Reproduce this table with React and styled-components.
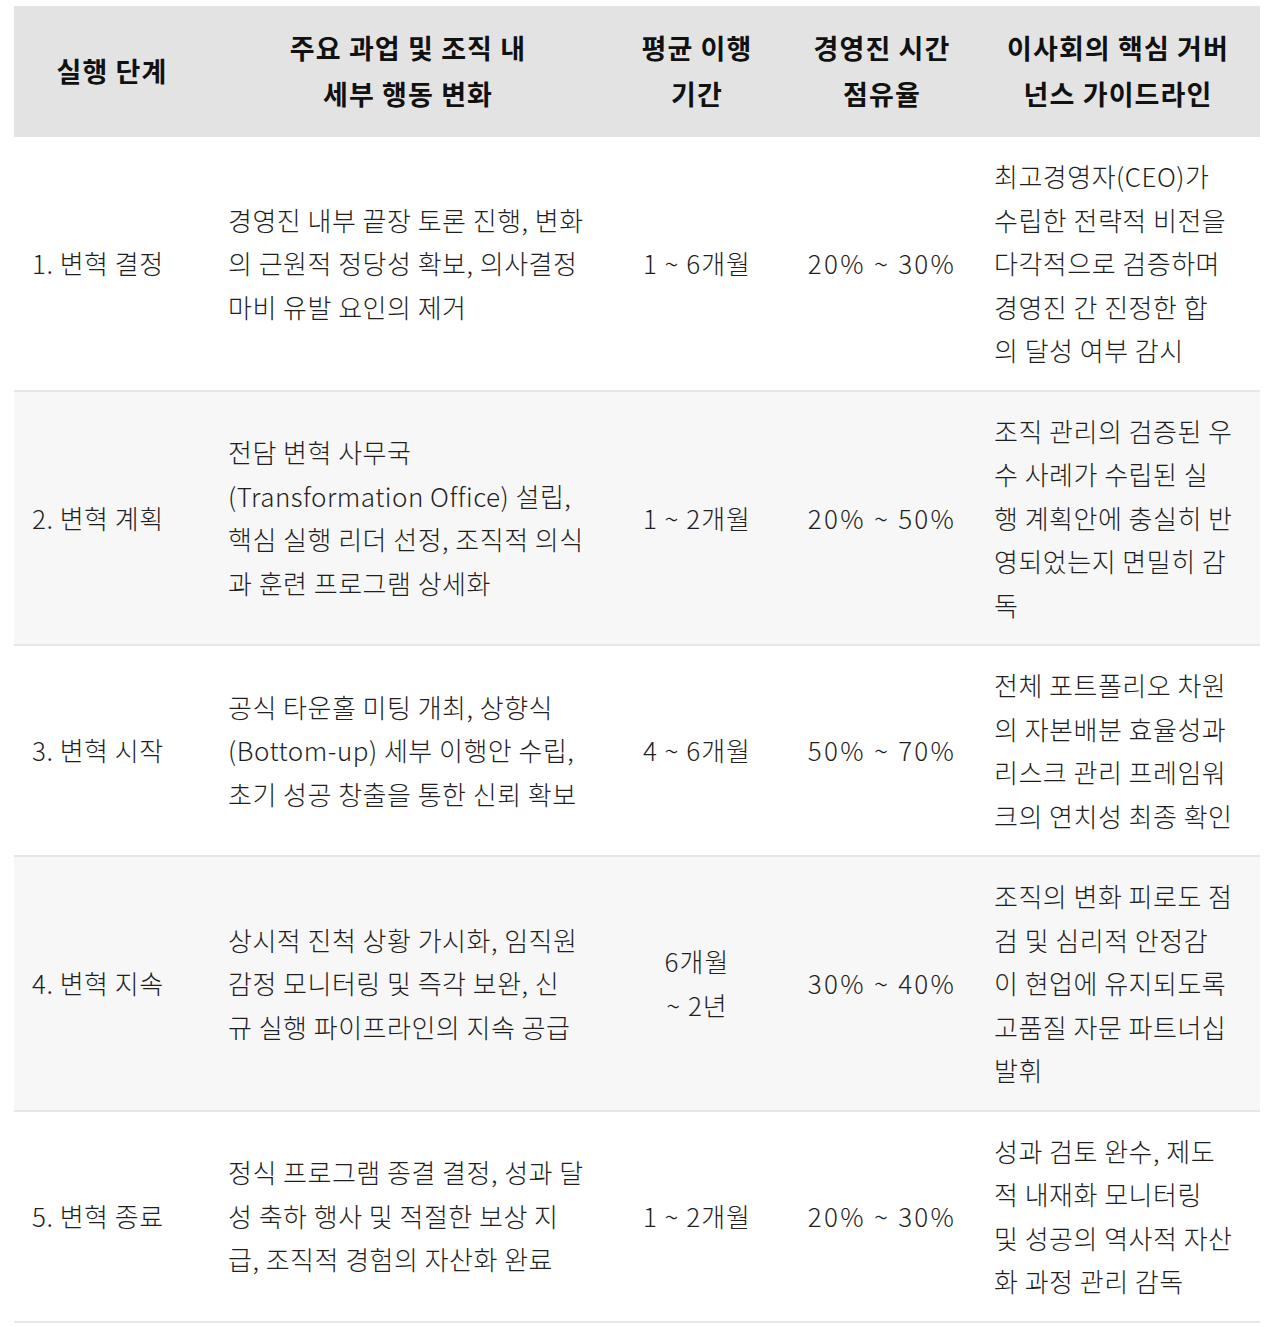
import * as React from "react";
import styled, { createGlobalStyle } from "styled-components";

const GlobalStyle = createGlobalStyle`
  html, body {
    margin: 0;
    padding: 0;
    background: #ffffff;
  }
  body {
    font-family: "Noto Sans CJK KR", "Noto Sans", sans-serif;
    color: #222222;
  }
`;

const Page = styled.div`
  padding: 6px 20px 8px 14px;
`;

const Table = styled.table`
  width: 1246px;
  border-collapse: collapse;
  table-layout: fixed;
`;

const Col = styled.col`
  width: ${(p) => p.$w}px;
`;

const HeadCell = styled.th`
  background: #e3e3e3;
  font-size: 27px;
  font-weight: 700;
  line-height: 46px;
  color: #111111;
  text-align: center;
  vertical-align: middle;
  padding: 19px 8px 20px;
  letter-spacing: 1.1px;
  white-space: nowrap;
`;

const Row = styled.tr`
  background: ${(p) => (p.$shaded ? "#f7f7f7" : "#ffffff")};
  border-bottom: 2px solid #e6e6e6;
`;

const Cell = styled.td`
  font-size: 26px;
  line-height: 43.5px;
  font-weight: 300;
  color: #1f1f1f;
  text-align: ${(p) => (p.$center ? "center" : "left")};
  vertical-align: middle;
  padding: 17px 18px 18px;
  white-space: nowrap;
  letter-spacing: ${(p) => p.$spacing ?? 0.5}px;
`;

const columns = [196, 396, 182, 188, 284];

const headers = [
  ["실행 단계"],
  ["주요 과업 및 조직 내", "세부 행동 변화"],
  ["평균 이행", "기간"],
  ["경영진 시간", "점유율"],
  ["이사회의 핵심 거버", "넌스 가이드라인"],
];

const rows = [
  {
    stage: "1. 변혁 결정",
    tasks: [
      "경영진 내부 끝장 토론 진행, 변화",
      "의 근원적 정당성 확보, 의사결정",
      "마비 유발 요인의 제거",
    ],
    period: ["1 ~ 6개월"],
    share: "20% ~ 30%",
    board: [
      "최고경영자(CEO)가",
      "수립한 전략적 비전을",
      "다각적으로 검증하며",
      "경영진 간 진정한 합",
      "의 달성 여부 감시",
    ],
  },
  {
    stage: "2. 변혁 계획",
    tasks: [
      "전담 변혁 사무국",
      "(Transformation Office) 설립,",
      "핵심 실행 리더 선정, 조직적 의식",
      "과 훈련 프로그램 상세화",
    ],
    period: ["1 ~ 2개월"],
    share: "20% ~ 50%",
    board: [
      "조직 관리의 검증된 우",
      "수 사례가 수립된 실",
      "행 계획안에 충실히 반",
      "영되었는지 면밀히 감",
      "독",
    ],
  },
  {
    stage: "3. 변혁 시작",
    tasks: [
      "공식 타운홀 미팅 개최, 상향식",
      "(Bottom-up) 세부 이행안 수립,",
      "초기 성공 창출을 통한 신뢰 확보",
    ],
    period: ["4 ~ 6개월"],
    share: "50% ~ 70%",
    board: [
      "전체 포트폴리오 차원",
      "의 자본배분 효율성과",
      "리스크 관리 프레임워",
      "크의 연치성 최종 확인",
    ],
  },
  {
    stage: "4. 변혁 지속",
    tasks: [
      "상시적 진척 상황 가시화, 임직원",
      "감정 모니터링 및 즉각 보완, 신",
      "규 실행 파이프라인의 지속 공급",
    ],
    period: ["6개월", "~ 2년"],
    share: "30% ~ 40%",
    board: [
      "조직의 변화 피로도 점",
      "검 및 심리적 안정감",
      "이 현업에 유지되도록",
      "고품질 자문 파트너십",
      "발휘",
    ],
  },
  {
    stage: "5. 변혁 종료",
    tasks: [
      "정식 프로그램 종결 결정, 성과 달",
      "성 축하 행사 및 적절한 보상 지",
      "급, 조직적 경험의 자산화 완료",
    ],
    period: ["1 ~ 2개월"],
    share: "20% ~ 30%",
    board: [
      "성과 검토 완수, 제도",
      "적 내재화 모니터링",
      "및 성공의 역사적 자산",
      "화 과정 관리 감독",
    ],
  },
];

function Lines({ lines }) {
  return lines.map((line, i) => (
    <React.Fragment key={i}>
      {i > 0 && <br />}
      {line}
    </React.Fragment>
  ));
}

export default function App() {
  return (
    <Page>
      <GlobalStyle />
      <Table>
        <colgroup>
          {columns.map((w, i) => (
            <Col key={i} $w={w} />
          ))}
        </colgroup>
        <thead>
          <tr>
            {headers.map((h, i) => (
              <HeadCell key={i}>
                <Lines lines={h} />
              </HeadCell>
            ))}
          </tr>
        </thead>
        <tbody>
          {rows.map((row, i) => (
            <Row key={row.stage} $shaded={i % 2 === 1}>
              <Cell>{row.stage}</Cell>
              <Cell>
                <Lines lines={row.tasks} />
              </Cell>
              <Cell $center $spacing={1}>
                <Lines lines={row.period} />
              </Cell>
              <Cell $center $spacing={2.3}>
                {row.share}
              </Cell>
              <Cell>
                <Lines lines={row.board} />
              </Cell>
            </Row>
          ))}
        </tbody>
      </Table>
    </Page>
  );
}
